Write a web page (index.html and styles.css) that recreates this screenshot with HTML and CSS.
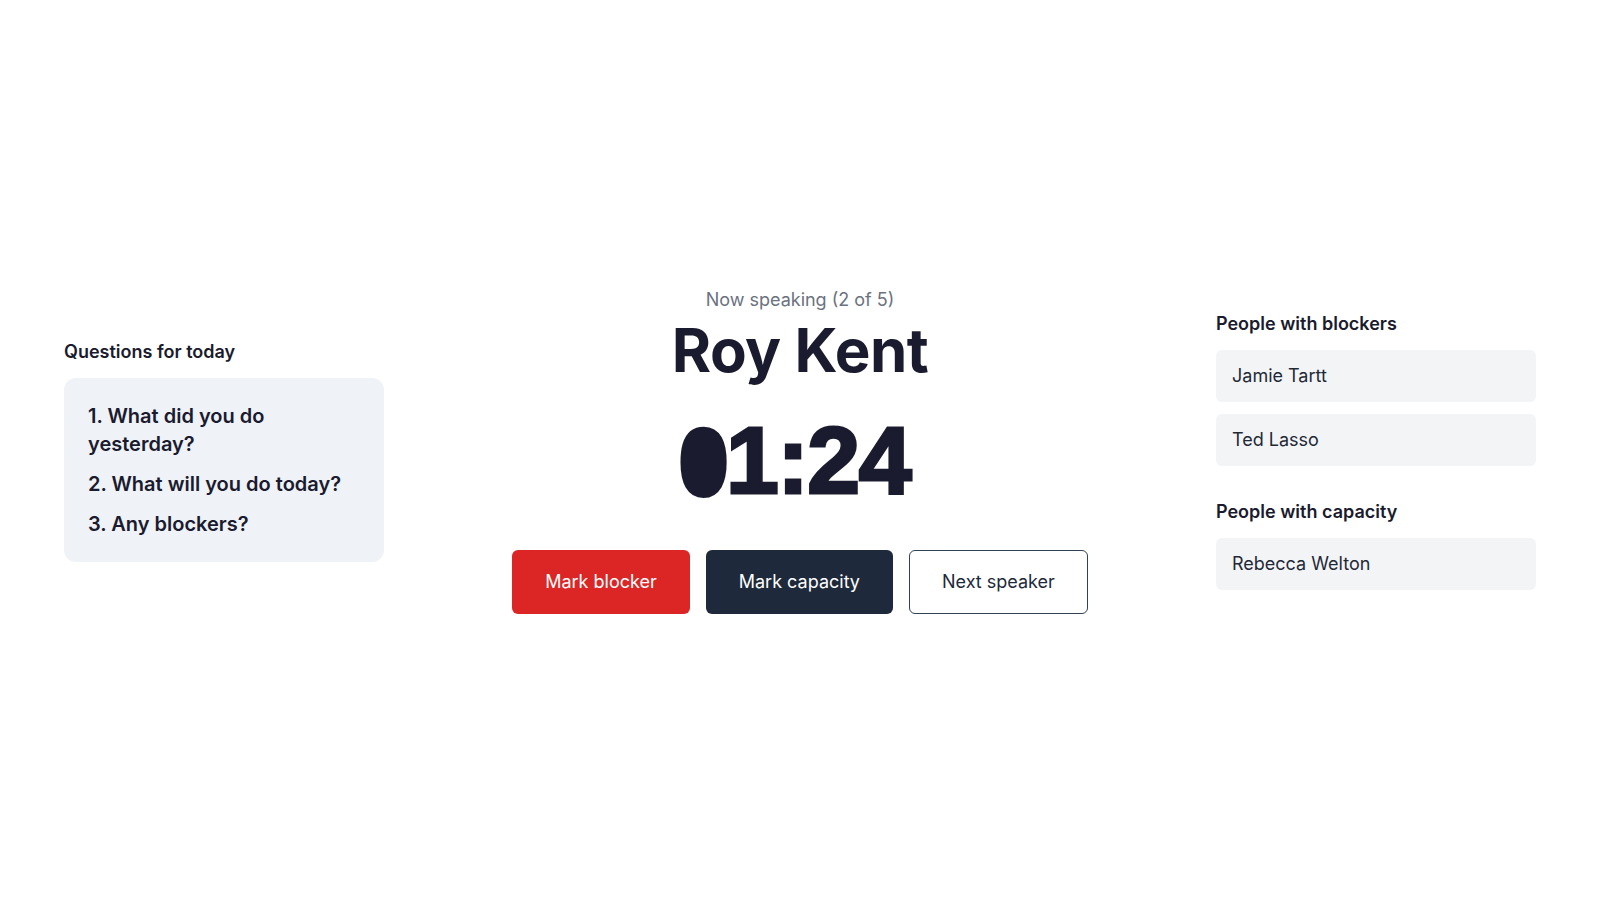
FILE: index.html
```html
<!DOCTYPE html>
<html lang="en">
<head>
    <meta charset="UTF-8">
    <meta name="viewport" content="width=device-width, initial-scale=1.0">
    <title>Standup</title>
    <link rel="stylesheet" href="styles.css">
</head>
<body>
    <aside class="questions">
        <h2 class="side-title">Questions for today</h2>
        <ol class="question-card">
            <li>1. What did you do yesterday?</li>
            <li>2. What will you do today?</li>
            <li>3. Any blockers?</li>
        </ol>
    </aside>

    <main class="speaker">
        <p class="status">Now speaking (2 of 5)</p>
        <h1 class="name">Roy Kent</h1>
        <div class="timer"><span class="zero">0</span>1:24</div>
        <div class="actions">
            <button class="btn btn-blocker">Mark blocker</button>
            <button class="btn btn-capacity">Mark capacity</button>
            <button class="btn btn-next">Next speaker</button>
        </div>
    </main>

    <aside class="people">
        <h2 class="side-title">People with blockers</h2>
        <ul class="person-list">
            <li>Jamie Tartt</li>
            <li>Ted Lasso</li>
        </ul>
        <h2 class="side-title capacity-title">People with capacity</h2>
        <ul class="person-list">
            <li>Rebecca Welton</li>
        </ul>
    </aside>
</body>
</html>
```

FILE: styles.css
```css
* {
    box-sizing: border-box;
}

body {
    display: flex;
    align-items: center;
    justify-content: space-between;
    height: 100vh;
    margin: 0;
    padding: 0 64px;
    font-family: Inter, "Noto Sans", sans-serif;
    color: #1a1b2e;
    background-color: #ffffff;
}

.questions,
.people {
    width: 320px;
}

.side-title {
    margin: 0 0 12px;
    font-size: 18px;
    line-height: 28px;
    font-weight: 600;
}

.question-card {
    list-style: none;
    margin: 0;
    padding: 24px;
    border-radius: 12px;
    background-color: #eff2f7;
}

.question-card li {
    font-size: 20px;
    line-height: 28px;
    font-weight: 600;
}

.question-card li + li {
    margin-top: 12px;
}

.speaker {
    display: flex;
    flex-direction: column;
    align-items: center;
}

.status {
    margin: 0;
    font-size: 18px;
    line-height: 28px;
    color: #6b7280;
}

.name {
    margin: 6px 0 0;
    font-size: 60px;
    line-height: 60px;
    font-weight: 700;
    letter-spacing: -0.5px;
}

.timer {
    height: 96px;
    margin: 32px 8px 0 0;
    font-family: "Liberation Sans", Arial, sans-serif;
    font-size: 95px;
    line-height: 96px;
    font-weight: 700;
    letter-spacing: -1.5px;
    -webkit-text-stroke: 3px #1a1b2e;
}

/* the leading zero is drawn as a solid pill */
.timer .zero {
    display: inline-block;
    margin-right: 2px;
    font-size: 78px;
    line-height: 1;
    vertical-align: 4px;
    -webkit-text-stroke-width: 16px;
    transform: scaleX(0.87);
}

.actions {
    display: flex;
    gap: 16px;
    margin-top: 42px;
}

.btn {
    padding: 17px 32px;
    font-family: inherit;
    font-size: 18px;
    line-height: 28px;
    border: 1px solid transparent;
    border-radius: 6px;
    cursor: pointer;
}

.btn-blocker {
    background-color: #dc2626;
    color: #ffffff;
}

.btn-capacity {
    background-color: #1e293b;
    color: #ffffff;
}

.btn-next {
    background-color: #ffffff;
    border-color: #334155;
    color: #1e293b;
}

.person-list {
    list-style: none;
    margin: 0;
    padding: 0;
}

.person-list li {
    padding: 12px 16px;
    font-size: 18px;
    line-height: 28px;
    color: #1f2937;
    border-radius: 6px;
    background-color: #f3f4f6;
}

.person-list li + li {
    margin-top: 12px;
}

.capacity-title {
    margin-top: 32px;
}
```
